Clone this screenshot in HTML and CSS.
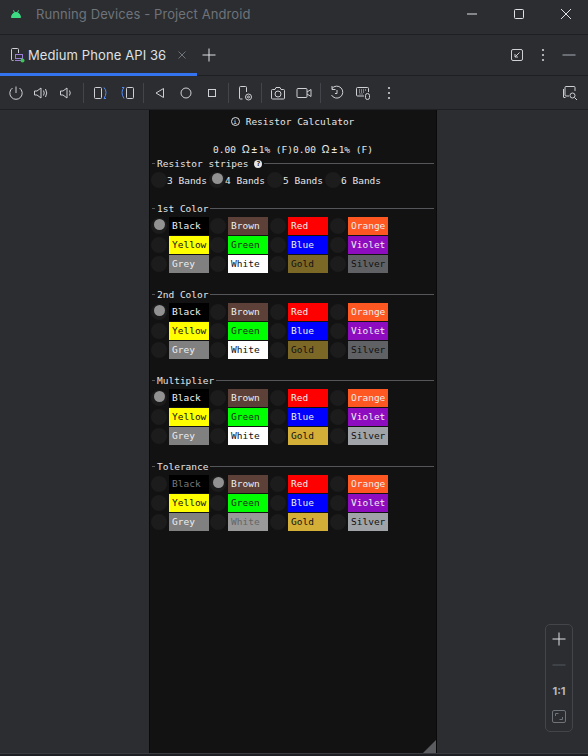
FILE: index.html
```html
<!DOCTYPE html>
<html lang="en">
<head>
  <meta charset="UTF-8">
  <meta name="viewport" content="width=device-width, initial-scale=1.0">
  <title>Running Devices - Project Android</title>
  <link rel="stylesheet" href="styles.css">
</head>
<body>
  <!-- Title bar -->
  <header class="titlebar">
    <svg class="android" width="10" height="8" viewBox="0 0 10 8"><path d="M0.500 7.500 Q1 2.500 5 2.500 Q9 2.500 9.500 7.500Z M2.500 0.300 L3.500 2.500 M7.500 0.300 L6.500 2.500" fill="#3ddc84" stroke="#3ddc84"/></svg>
    <span class="window-title">Running Devices - Project Android</span>
    <div class="window-btns">
      <svg width="12" height="12" viewBox="0 0 12 12"><path d="M1 6H11" stroke="#dfe1e5"/></svg>
      <svg width="12" height="12" viewBox="0 0 12 12"><rect x="1.500" y="1.500" width="9" height="9" rx="1" fill="none" stroke="#dfe1e5"/></svg>
      <svg width="12" height="12" viewBox="0 0 12 12"><path d="M1 1L11 11M11 1L1 11" stroke="#dfe1e5"/></svg>
    </div>
  </header>

  <!-- Tabs -->
  <nav class="tabbar">
    <div class="tab">
      <svg width="16" height="16" viewBox="0 0 16 16" fill="none"><path d="M3.500 13.500H2.500a1 1 0 0 1-1-1v-10a1 1 0 0 1 1-1h5a1 1 0 0 1 1 1V6" stroke="#ced0d6"/><rect x="5.500" y="7.500" width="7" height="4" stroke="#9b7fd6"/><path d="M5 13.500H11" stroke="#9b7fd6"/><circle cx="12.500" cy="13.500" r="2" fill="#3fc55a"/></svg>
      <span class="tab-name">Medium Phone API 36</span>
      <svg class="tab-close" width="10" height="10" viewBox="0 0 10 10"><path d="M1.500 1.500L8.500 8.500M8.500 1.500L1.500 8.500" stroke="#6f737a"/></svg>
    </div>
    <svg class="tab-add" width="14" height="14" viewBox="0 0 14 14"><path d="M7 0.500V13.500M0.500 7H13.500" stroke="#dfe1e5"/></svg>
    <div class="tab-tools">
      <svg width="14" height="14" viewBox="0 0 14 14" fill="none"><rect x="1.500" y="1.500" width="11" height="11" rx="1.500" stroke="#ced0d6"/><path d="M9.500 4.500L5 9M5 6V9H8" stroke="#ced0d6"/></svg>
      <svg width="14" height="14" viewBox="0 0 14 14" fill="#ced0d6"><circle cx="7" cy="2" r="1.100"/><circle cx="7" cy="7" r="1.100"/><circle cx="7" cy="12" r="1.100"/></svg>
      <svg width="14" height="14" viewBox="0 0 14 14"><path d="M0.500 7H13.500" stroke="#868a91" stroke-width="1.400"/></svg>
    </div>
  </nav>

  <!-- Device toolbar -->
  <div class="toolbar">
    <svg width="16" height="16" viewBox="0 0 16 16" fill="none" stroke="#ced0d6"><path d="M8 1.500V8M4.500 3a6.200 6.200 0 1 0 7 0"/></svg>
    <svg class="snug" width="16" height="16" viewBox="0 0 16 16" fill="none" stroke="#ced0d6"><path d="M1.500 6V10H4L8 13V3L4 6Z M10.500 5.500Q12 8 10.500 10.500 M12.500 4Q15 8 12.500 12"/></svg>
    <svg class="snug" width="16" height="16" viewBox="0 0 16 16" fill="none" stroke="#ced0d6"><path d="M2.500 6V10H5L9 13V3L5 6Z M11.500 5.500Q13 8 11.500 10.500"/></svg>
    <i class="sep first"></i>
    <svg width="16" height="16" viewBox="0 0 16 16" fill="none"><rect x="1.500" y="2.500" width="7" height="11" rx="1" stroke="#ced0d6"/><path d="M11 2.500Q15 7 11 13.500M11 13.500H13" stroke="#548af7"/></svg>
    <svg width="16" height="16" viewBox="0 0 16 16" fill="none"><rect x="7.500" y="2.500" width="7" height="11" rx="1" stroke="#ced0d6"/><path d="M5 2.500Q1 7 5 13.500M3 2.500H5" stroke="#548af7"/></svg>
    <i class="sep"></i>
    <svg width="16" height="16" viewBox="0 0 16 16" fill="none" stroke="#ced0d6"><path d="M11.500 3.500V12.500L4 8Z"/></svg>
    <svg width="16" height="16" viewBox="0 0 16 16" fill="none" stroke="#ced0d6"><circle cx="8" cy="8" r="5"/></svg>
    <svg width="16" height="16" viewBox="0 0 16 16" fill="none" stroke="#ced0d6"><rect x="4.500" y="4.500" width="7" height="7"/></svg>
    <i class="sep"></i>
    <svg width="16" height="16" viewBox="0 0 16 16" fill="none" stroke="#ced0d6"><path d="M5.500 14H3.500a1 1 0 0 1-1-1V2.500a1 1 0 0 1 1-1h5a1 1 0 0 1 1 1V7"/><circle cx="11.500" cy="12" r="3"/><circle cx="11.500" cy="12" r="1"/></svg>
    <i class="sep"></i>
    <svg width="16" height="16" viewBox="0 0 16 16" fill="none" stroke="#ced0d6"><path d="M1.500 5.500a1 1 0 0 1 1-1H5L6 2.500H10L11 4.500H13.500a1 1 0 0 1 1 1V13a1 1 0 0 1-1 1H2.500a1 1 0 0 1-1-1Z"/><circle cx="8" cy="9" r="3"/></svg>
    <svg width="16" height="16" viewBox="0 0 16 16" fill="none" stroke="#ced0d6"><rect x="1" y="3.500" width="10" height="9" rx="1"/><path d="M11 7L15 4.500V11.500L11 9"/></svg>
    <i class="sep"></i>
    <svg width="16" height="16" viewBox="0 0 16 16" fill="none" stroke="#ced0d6"><path d="M3 3.500A6 6 0 1 1 2.500 10M3 1V4.500H6.500M8 5V8.500H6"/></svg>
    <svg width="16" height="16" viewBox="0 0 16 16" fill="none" stroke="#ced0d6"><path d="M9 11H2.500a1 1 0 0 1-1-1V3.500a1 1 0 0 1 1-1h10a1 1 0 0 1 1 1V7"/><path d="M4 5H11M4 7H10M4.500 9H8" stroke-dasharray="1 1"/><rect x="10.500" y="8.500" width="4" height="6" rx="2"/></svg>
    <svg width="16" height="16" viewBox="0 0 16 16" fill="#ced0d6"><circle cx="8" cy="3" r="1.100"/><circle cx="8" cy="8" r="1.100"/><circle cx="8" cy="13" r="1.100"/></svg>
    <svg class="toolbar-end" width="16" height="16" viewBox="0 0 16 16" fill="none" stroke="#ced0d6"><path d="M3.500 12.500H2a.5.5 0 0 1-.5-.5V4M4 1.500H12a1 1 0 0 1 1 1V6M4 1.500a1 1 0 0 0-1 1V10a1 1 0 0 0 1 1H7"/><circle cx="10.500" cy="10.500" r="2.500"/><path d="M12.500 12.500L15 15"/></svg>
  </div>

  <main class="stage">
    <div class="phone">
      <div class="app-title"><span class="info-icon">i</span>Resistor Calculator</div>
      <div class="result">0.00 <span class="sym">Ω±</span>1% (F)0.00 <span class="sym">Ω±</span>1% (F)</div>

      <fieldset class="stripes">
        <legend>Resistor stripes <span class="help">?</span></legend>
        <div class="band-row">
          <label class="band"><i class="radio"></i>3 Bands</label>
          <label class="band"><i class="radio on"></i>4 Bands</label>
          <label class="band"><i class="radio"></i>5 Bands</label>
          <label class="band"><i class="radio"></i>6 Bands</label>
        </div>
      </fieldset>

      <fieldset class="group">
        <legend>1st Color</legend>
        <div class="colors">
          <i class="radio on"></i><span class="chip black">Black</span>
          <i class="radio"></i><span class="chip brown">Brown</span>
          <i class="radio"></i><span class="chip red">Red</span>
          <i class="radio"></i><span class="chip orange">Orange</span>
          <i class="radio"></i><span class="chip yellow">Yellow</span>
          <i class="radio"></i><span class="chip green">Green</span>
          <i class="radio"></i><span class="chip blue">Blue</span>
          <i class="radio"></i><span class="chip violet">Violet</span>
          <i class="radio"></i><span class="chip grey">Grey</span>
          <i class="radio"></i><span class="chip white">White</span>
          <i class="radio"></i><span class="chip gold off">Gold</span>
          <i class="radio"></i><span class="chip silver off">Silver</span>
        </div>
      </fieldset>

      <fieldset class="group">
        <legend>2nd Color</legend>
        <div class="colors">
          <i class="radio on"></i><span class="chip black">Black</span>
          <i class="radio"></i><span class="chip brown">Brown</span>
          <i class="radio"></i><span class="chip red">Red</span>
          <i class="radio"></i><span class="chip orange">Orange</span>
          <i class="radio"></i><span class="chip yellow">Yellow</span>
          <i class="radio"></i><span class="chip green">Green</span>
          <i class="radio"></i><span class="chip blue">Blue</span>
          <i class="radio"></i><span class="chip violet">Violet</span>
          <i class="radio"></i><span class="chip grey">Grey</span>
          <i class="radio"></i><span class="chip white">White</span>
          <i class="radio"></i><span class="chip gold off">Gold</span>
          <i class="radio"></i><span class="chip silver off">Silver</span>
        </div>
      </fieldset>

      <fieldset class="group">
        <legend>Multiplier</legend>
        <div class="colors">
          <i class="radio on"></i><span class="chip black">Black</span>
          <i class="radio"></i><span class="chip brown">Brown</span>
          <i class="radio"></i><span class="chip red">Red</span>
          <i class="radio"></i><span class="chip orange">Orange</span>
          <i class="radio"></i><span class="chip yellow">Yellow</span>
          <i class="radio"></i><span class="chip green">Green</span>
          <i class="radio"></i><span class="chip blue">Blue</span>
          <i class="radio"></i><span class="chip violet">Violet</span>
          <i class="radio"></i><span class="chip grey">Grey</span>
          <i class="radio"></i><span class="chip white">White</span>
          <i class="radio"></i><span class="chip gold">Gold</span>
          <i class="radio"></i><span class="chip silver">Silver</span>
        </div>
      </fieldset>

      <fieldset class="group">
        <legend>Tolerance</legend>
        <div class="colors">
          <i class="radio"></i><span class="chip black off">Black</span>
          <i class="radio on"></i><span class="chip brown">Brown</span>
          <i class="radio"></i><span class="chip red">Red</span>
          <i class="radio"></i><span class="chip orange">Orange</span>
          <i class="radio"></i><span class="chip yellow">Yellow</span>
          <i class="radio"></i><span class="chip green">Green</span>
          <i class="radio"></i><span class="chip blue">Blue</span>
          <i class="radio"></i><span class="chip violet">Violet</span>
          <i class="radio"></i><span class="chip grey">Grey</span>
          <i class="radio"></i><span class="chip white off">White</span>
          <i class="radio"></i><span class="chip gold">Gold</span>
          <i class="radio"></i><span class="chip silver">Silver</span>
        </div>
      </fieldset>

      <div class="resize-corner"></div>
    </div>

    <!-- Zoom controls float over the device view -->
    <div class="zoom-box">
      <svg width="14" height="14" viewBox="0 0 14 14"><path d="M7 0.500V13.500M0.500 7H13.500" stroke="#dfe1e5"/></svg>
      <svg width="14" height="14" viewBox="0 0 14 14"><path d="M0.500 7H13.500" stroke="#55585e"/></svg>
      <span class="zoom-label">1:1</span>
      <svg width="14" height="14" viewBox="0 0 14 14" fill="none" stroke="#6f737a"><rect x="0.500" y="0.500" width="13" height="12" rx="1.500"/><path d="M3.500 6V3.500H6.500M10.500 7V9.500H7.500"/></svg>
    </div>
  </main>
  <div class="bottom-edge"></div>
</body>
</html>
```

FILE: styles.css
```css
* {
  box-sizing: border-box;
}
body {
  margin: 0;
  height: 756px;
  overflow: hidden;
  display: flex;
  flex-direction: column;
  background-color: #2b2d30;
  font-family: "Inter", "Noto Sans", sans-serif;
  color: #dfe1e5;
}
svg {
  display: block;
  flex: none;
}

/* ide chrome */
.titlebar {
  height: 35px;
  flex: none;
  display: flex;
  align-items: center;
  padding: 0 0 7px 11px;
  border-bottom: 1px solid #1e1f22;
}
.android {
  margin-right: 15px;
}
.window-title {
  font-size: 13px;
  letter-spacing: 0.1px;
  color: #6f737a;
}
.window-btns {
  margin-left: auto;
  display: flex;
  gap: 35px;
  padding-right: 16px;
}
.tabbar {
  height: 41px;
  flex: none;
  display: flex;
  align-items: center;
  padding-left: 10px;
  border-bottom: 1px solid #1e1f22;
  position: relative;
}
.tabbar::after {
  content: "";
  position: absolute;
  left: 0;
  bottom: -1px;
  width: 197px;
  height: 3px;
  background-color: #3574f0;
}
.tab {
  display: flex;
  align-items: center;
}
.tab-name {
  font-size: 13px;
  letter-spacing: 0.1px;
  margin-left: 2px;
}
.tab-close {
  margin-left: 11px;
}
.tab-add {
  margin-left: 15px;
}
.tab-tools {
  margin-left: auto;
  display: flex;
  gap: 12px;
  padding-right: 12px;
  align-items: center;
}
.toolbar {
  height: 34px;
  flex: none;
  display: flex;
  align-items: center;
  padding: 0 10px 0 8px;
  gap: 10px;
  border-bottom: 1px solid #1e1f22;
}
.snug {
  margin-left: -1px;
}
.sep {
  width: 1px;
  height: 20px;
  background-color: #43454a;
  margin: 0 -2px;
}
.sep.first {
  margin: 0 -1px;
}
.toolbar-end {
  margin-left: auto;
}
.bottom-edge {
  height: 3px;
  flex: none;
  background-color: #1e1f22;
  border-top: 1px solid #393b40;
}

/* device view */
.stage {
  flex: 1;
  position: relative;
  padding-left: 149px;
}
.phone {
  width: 288px;
  height: 643px;
  background-color: #121212;
  position: relative;
  font-family: "DejaVu Sans Mono", monospace;
  font-size: 9.5px;
  color: #e6e6e6;
  padding: 0 2px;
  border-left: 1px solid #0a0a0a;
  border-right: 1px solid #0a0a0a;
}
.app-title {
  height: 22px;
  display: flex;
  align-items: center;
  justify-content: center;
  gap: 6px;
  padding-right: 1px;
}
.info-icon {
  width: 9px;
  height: 9px;
  border: 1px solid #ddd;
  border-radius: 50%;
  font-size: 6px;
  line-height: 7px;
  text-align: center;
}
.result {
  margin-top: 10px;
  text-align: center;
  height: 16px;
  line-height: 16px;
}
.sym {
  font-family: "Inter", sans-serif;
  font-size: 10.500px;
  line-height: 10px;
  letter-spacing: 1px;
}
fieldset {
  margin: 0;
  padding: 0;
  border: 0;
  border-top: 1px solid #54565a;
  min-width: 0;
}
legend {
  margin-left: 3px;
  padding: 0 2px;
  line-height: 11px;
}
.help {
  display: inline-block;
  width: 8px;
  height: 8px;
  border-radius: 50%;
  background-color: #e6e6e6;
  color: #121212;
  font-size: 7px;
  line-height: 8px;
  text-align: center;
  font-weight: bold;
  vertical-align: 1px;
}
.stripes {
  height: 34px;
}
.band-row {
  display: flex;
  margin: 3px 0 0 -1px;
}
.band {
  display: flex;
  align-items: center;
  width: 58px;
}
.radio {
  width: 16px;
  height: 16px;
  border-radius: 50%;
  background-color: #1c1c1c;
  position: relative;
  flex: none;
}
.radio.on::after {
  content: "";
  position: absolute;
  left: 2.500px;
  top: 1px;
  width: 11px;
  height: 11px;
  border-radius: 50%;
  background-color: #929292;
}
.group {
  margin-top: 11px;
  height: 75px;
}
.colors {
  display: grid;
  grid-template-columns: 18px 41px 18px 42px 18px 42px 18px 40px;
  row-gap: 1px;
  align-items: center;
  margin: 3px 0 0 -1px;
}
.chip {
  width: 40px;
  height: 18px;
  line-height: 18px;
  padding-left: 3px;
}
.black { background-color: #000; color: #eee; }
.brown { background-color: #5d4037; color: #eee; }
.red { background-color: #f00; color: #eee; }
.orange { background-color: #ff5722; color: #eee; }
.yellow { background-color: #ff0; color: #111; }
.green { background-color: #0f0; color: #222; }
.blue { background-color: #00f; color: #eee; }
.violet { background-color: #8e0cc0; color: #eee; }
.grey { background-color: #808080; color: #eee; }
.white { background-color: #fff; color: #111; }
.gold { background-color: #d4af37; color: #111; }
.silver { background-color: #a0a3a8; color: #111; }
.chip.off { opacity: 0.55; }
.chip.black.off { opacity: 1; color: #777; }
.chip.white.off { background-color: #999; color: #666; opacity: 1; }
.resize-corner {
  position: absolute;
  right: 0;
  bottom: 0;
  width: 0;
  height: 0;
  border-left: 13px solid transparent;
  border-bottom: 13px solid #5a5c60;
}

/* zoom */
.zoom-box {
  position: absolute;
  left: 545px;
  top: 514px;
  width: 28px;
  height: 108px;
  border: 1px solid #43454a;
  border-radius: 5px;
  background-color: #2b2d30;
  display: flex;
  flex-direction: column;
  align-items: center;
  gap: 12px;
  padding-top: 7px;
}
.zoom-label {
  font-size: 11px;
  line-height: 14px;
  font-weight: bold;
  color: #b4b8bf;
}
```
